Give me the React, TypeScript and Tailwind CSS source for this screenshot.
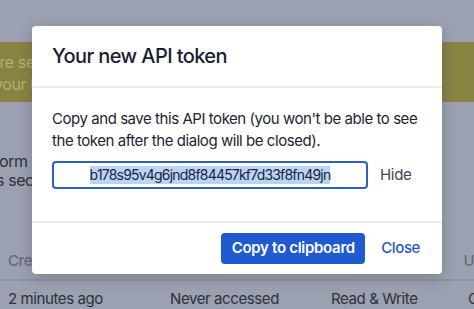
const font = { fontFamily: "Inter, 'Noto Sans', sans-serif" };

function Background() {
  return (
    <div className="flex flex-col tracking-[-0.4px]">
      {/* notice banner */}
      <div className="mt-[42px] h-[60px] bg-[#888343] pt-[9px] text-[16px] leading-[22px] text-[#b5b078]">
        <div className="-ml-[4px]">ire secure</div>
        <div className="-ml-[6px]">your list</div>
      </div>

      {/* description */}
      <div className="mt-[50px] text-[16px] leading-[19px] text-[#2c313c]">
        <div className="-ml-[6px]">form below</div>
        <div className="-ml-[4px]">s secure</div>
      </div>

      {/* table header */}
      <div className="mt-[54px] flex h-[37px] items-center justify-between border-b-2 border-[#8d93a1] pl-[8px] text-[15px] text-[#636a78]">
        <span className="font-medium">Created</span>
        <span className="-mr-[8px] font-medium">Us</span>
      </div>

      {/* table row */}
      <div className="flex h-[36px] items-center text-[15px] text-[#2c313c]">
        <span className="w-[170px] shrink-0 pl-[8px]">2 minutes ago</span>
        <span className="w-[161px] shrink-0">Never accessed</span>
        <span className="w-[137px] shrink-0">Read &amp; Write</span>
        <span>Co</span>
      </div>
    </div>
  );
}

function TokenDialog() {
  const token = "b178s95v4g6jnd8f84457kf7d33f8fn49jn";
  return (
    <div className="absolute left-[32px] top-[26px] flex w-[410px] flex-col rounded-[4px] bg-white shadow-[0_4px_14px_rgba(30,35,50,0.25)]">
      <div className="flex h-[62px] items-center border-b-2 border-[#ececee] px-[20px]">
        <h2 className="text-[20px] font-medium tracking-[-0.6px] text-[#172033]">Your new API token</h2>
      </div>

      <div className="px-[20px] pb-[32px] pt-[20px]">
        <p className="text-[15px] leading-[22px] tracking-[-0.45px] text-[#1e2433]">
          Copy and save this API token (you won't be able to see the token after the dialog will be closed).
        </p>
        <div className="mt-[9px] flex items-center gap-[12px]">
          <div className="flex h-[28px] w-[316px] shrink-0 items-center justify-center rounded-[4px] border-2 border-[#2e5fbf] text-[14px] tracking-[-0.8px] text-[#1e2433]">
            <span className="bg-[#b8d4f8] leading-[18px]">{token}</span>
          </div>
          <button className="text-[15px] tracking-[-0.3px] text-[#3c4352]">Hide</button>
        </div>
      </div>

      <div className="flex h-[53px] items-center justify-end gap-[16px] border-t-2 border-[#ececee] pr-[22px]">
        <button className="h-[31px] w-[144px] rounded-[4px] bg-[#1f5ad1] text-[15px] font-semibold tracking-[-0.3px] text-white">
          Copy to clipboard
        </button>
        <button className="text-[15px] font-medium tracking-[-0.4px] text-[#2458c4]">Close</button>
      </div>
    </div>
  );
}

export default function App() {
  return (
    <div style={font} className="relative h-[309px] w-full overflow-hidden bg-[#9ba1b0]">
      <Background />
      <TokenDialog />
    </div>
  );
}
